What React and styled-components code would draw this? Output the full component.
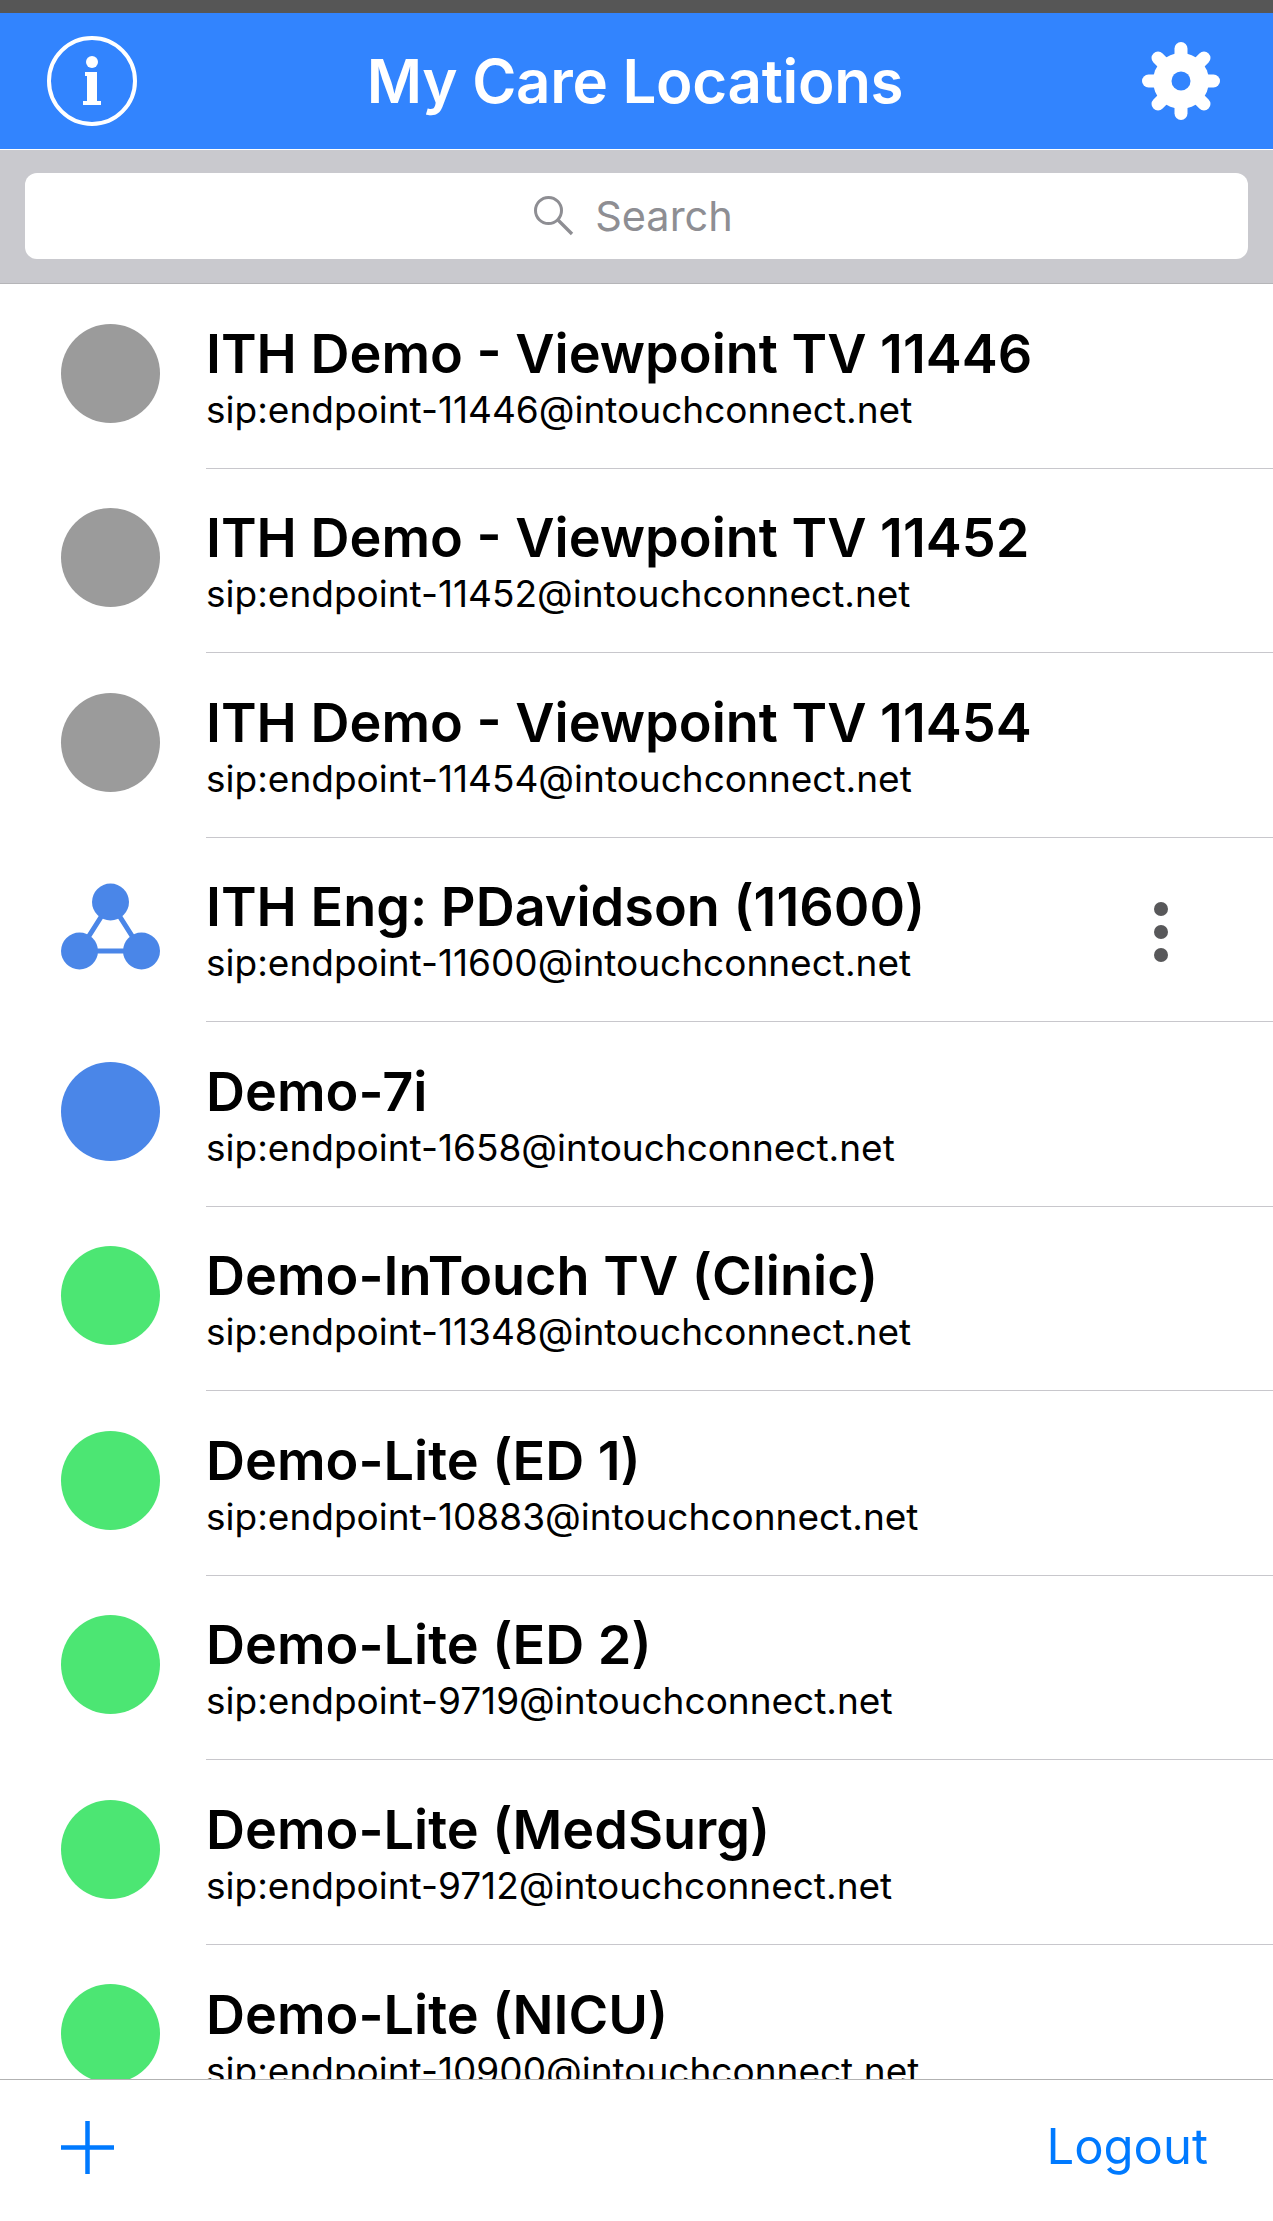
import React from "react";
import styled, { createGlobalStyle } from "styled-components";

const GlobalStyle = createGlobalStyle`
  html, body {
    margin: 0;
    padding: 0;
    background: #fff;
    font-family: Inter, "Liberation Sans", sans-serif;
  }
`;

const Page = styled.div`
  width: 1273px;
  height: 2221px;
  display: flex;
  flex-direction: column;
  overflow: hidden;
  background: #fff;
`;

const StatusBar = styled.div`
  height: 13px;
  flex: none;
  background: #565656;
`;

const Header = styled.header`
  height: 137px;
  flex: none;
  box-sizing: border-box;
  display: flex;
  align-items: center;
  justify-content: space-between;
  padding: 0 53px 0 46px;
  background: #3284fe;
  border-bottom: 1px solid #fff;
`;

const Title = styled.h1`
  margin: 0 0 0 -10px;
  font-size: 60px;
  font-weight: 600;
  letter-spacing: -0.3px;
  color: #fff;
`;

const SearchBar = styled.div`
  height: 134px;
  flex: none;
  box-sizing: border-box;
  padding: 23px 25px 24px;
  background: #c9c9ce;
  border-bottom: 1px solid #b5b5b8;
`;

const SearchField = styled.div`
  height: 86px;
  display: flex;
  align-items: center;
  justify-content: center;
  gap: 21px;
  padding-right: 6px;
  background: #fff;
  border-radius: 12px;
  color: #8e8e93;
  font-size: 41.5px;
`;

const List = styled.div`
  flex: 1;
  min-height: 0;
  overflow: hidden;
`;

const Row = styled.div`
  height: 184.5px;
  display: flex;
  align-items: center;
  padding-left: 61px;
  box-sizing: border-box;
`;

const Dot = styled.div`
  width: 99px;
  height: 99px;
  flex: none;
  border-radius: 50%;
  margin-top: -6px;
  background: ${(p) => p.$color};
`;

const NetIcon = styled.svg`
  width: 99px;
  height: 99px;
  flex: none;
  margin-top: -6px;
`;

const RowBody = styled.div`
  flex: 1;
  align-self: stretch;
  margin-left: 46px;
  display: flex;
  align-items: center;
  justify-content: space-between;
  border-bottom: ${(p) => (p.$last ? "none" : "1px solid #c8c7cc")};
`;

const TextBlock = styled.div`
  margin-top: 2px;
`;

const Name = styled.div`
  font-size: 54px;
  line-height: 62px;
  font-weight: 600;
  color: #000;
  white-space: nowrap;
`;

const Address = styled.div`
  margin-top: 4px;
  font-size: 37px;
  line-height: 42px;
  color: #000;
  white-space: nowrap;
`;

const MoreButton = styled.div`
  display: flex;
  flex-direction: column;
  gap: 9px;
  margin-right: 105px;
  margin-top: 6px;
`;

const MoreDot = styled.span`
  width: 14px;
  height: 14px;
  border-radius: 50%;
  background: #58585a;
`;

const Footer = styled.footer`
  height: 142px;
  flex: none;
  box-sizing: border-box;
  display: flex;
  align-items: center;
  justify-content: space-between;
  padding: 0 65px 6px 61px;
  background: #fff;
  border-top: 1px solid #b2b2b2;
`;

const PlusIcon = styled.svg`
  width: 53px;
  height: 53px;
`;

const Logout = styled.span`
  margin-bottom: 2px;
  font-size: 49px;
  color: #007aff;
`;

const GREY = "#9b9b9b";
const BLUE = "#4a86e8";
const GREEN = "#4ce673";

const rows = [
  { name: "ITH Demo - Viewpoint TV 11446", sip: "sip:endpoint-11446@intouchconnect.net", color: GREY },
  { name: "ITH Demo - Viewpoint TV 11452", sip: "sip:endpoint-11452@intouchconnect.net", color: GREY },
  { name: "ITH Demo - Viewpoint TV 11454", sip: "sip:endpoint-11454@intouchconnect.net", color: GREY },
  { name: "ITH Eng: PDavidson (11600)", sip: "sip:endpoint-11600@intouchconnect.net", net: true },
  { name: "Demo-7i", sip: "sip:endpoint-1658@intouchconnect.net", color: BLUE },
  { name: "Demo-InTouch TV (Clinic)", sip: "sip:endpoint-11348@intouchconnect.net", color: GREEN },
  { name: "Demo-Lite (ED 1)", sip: "sip:endpoint-10883@intouchconnect.net", color: GREEN },
  { name: "Demo-Lite (ED 2)", sip: "sip:endpoint-9719@intouchconnect.net", color: GREEN },
  { name: "Demo-Lite (MedSurg)", sip: "sip:endpoint-9712@intouchconnect.net", color: GREEN },
  { name: "Demo-Lite (NICU)", sip: "sip:endpoint-10900@intouchconnect.net", color: GREEN },
];

function InfoIcon() {
  return (
    <svg width="92" height="92" viewBox="0 0 92 92">
      <circle cx="46" cy="46" r="43" fill="none" stroke="#fff" strokeWidth="4" />
      <circle cx="46" cy="27" r="6" fill="#fff" />
      <path d="M39 37h12v29h4v4H37v-4h4V41h-2z" fill="#fff" />
    </svg>
  );
}

function GearIcon() {
  const teeth = [0, 45, 90, 135, 180, 225, 270, 315];
  return (
    <svg width="78" height="78" viewBox="0 0 78 78">
      {teeth.map((a) => (
        <line
          key={a}
          x1="39"
          y1="39"
          x2="39"
          y2="6.5"
          stroke="#fff"
          strokeWidth="13"
          strokeLinecap="round"
          transform={`rotate(${a} 39 39)`}
        />
      ))}
      <circle cx="39" cy="39" r="28" fill="#fff" />
      <circle cx="39" cy="39" r="9.5" fill="#3284fe" />
    </svg>
  );
}

function SearchIcon() {
  return (
    <svg width="40" height="40" viewBox="0 0 40 40">
      <circle cx="14.5" cy="14.5" r="13" fill="none" stroke="#8e8e93" strokeWidth="3" />
      <path d="M24 24l14 14" fill="none" stroke="#8e8e93" strokeWidth="3.4" />
    </svg>
  );
}

function NetworkIcon() {
  return (
    <NetIcon viewBox="0 0 99 99">
      <path d="M49.5 25 18.5 74h62z" fill="none" stroke={BLUE} strokeWidth="5" />
      <circle cx="49.5" cy="25" r="18.5" fill={BLUE} />
      <circle cx="18.5" cy="74" r="18.5" fill={BLUE} />
      <circle cx="80.5" cy="74" r="18.5" fill={BLUE} />
    </NetIcon>
  );
}

export default function App() {
  return (
    <Page>
      <GlobalStyle />
      <StatusBar />
      <Header>
        <InfoIcon />
        <Title>My Care Locations</Title>
        <GearIcon />
      </Header>
      <SearchBar>
        <SearchField>
          <SearchIcon />
          <span>Search</span>
        </SearchField>
      </SearchBar>
      <List>
        {rows.map((r, i) => (
          <Row key={r.sip}>
            {r.net ? <NetworkIcon /> : <Dot $color={r.color} />}
            <RowBody $last={i === rows.length - 1}>
              <TextBlock>
                <Name>{r.name}</Name>
                <Address>{r.sip}</Address>
              </TextBlock>
              {r.net && (
                <MoreButton>
                  <MoreDot />
                  <MoreDot />
                  <MoreDot />
                </MoreButton>
              )}
            </RowBody>
          </Row>
        ))}
      </List>
      <Footer>
        <PlusIcon viewBox="0 0 53 53">
          <path d="M26.5 0v53M0 26.5h53" stroke="#007aff" strokeWidth="4.5" fill="none" />
        </PlusIcon>
        <Logout>Logout</Logout>
      </Footer>
    </Page>
  );
}
